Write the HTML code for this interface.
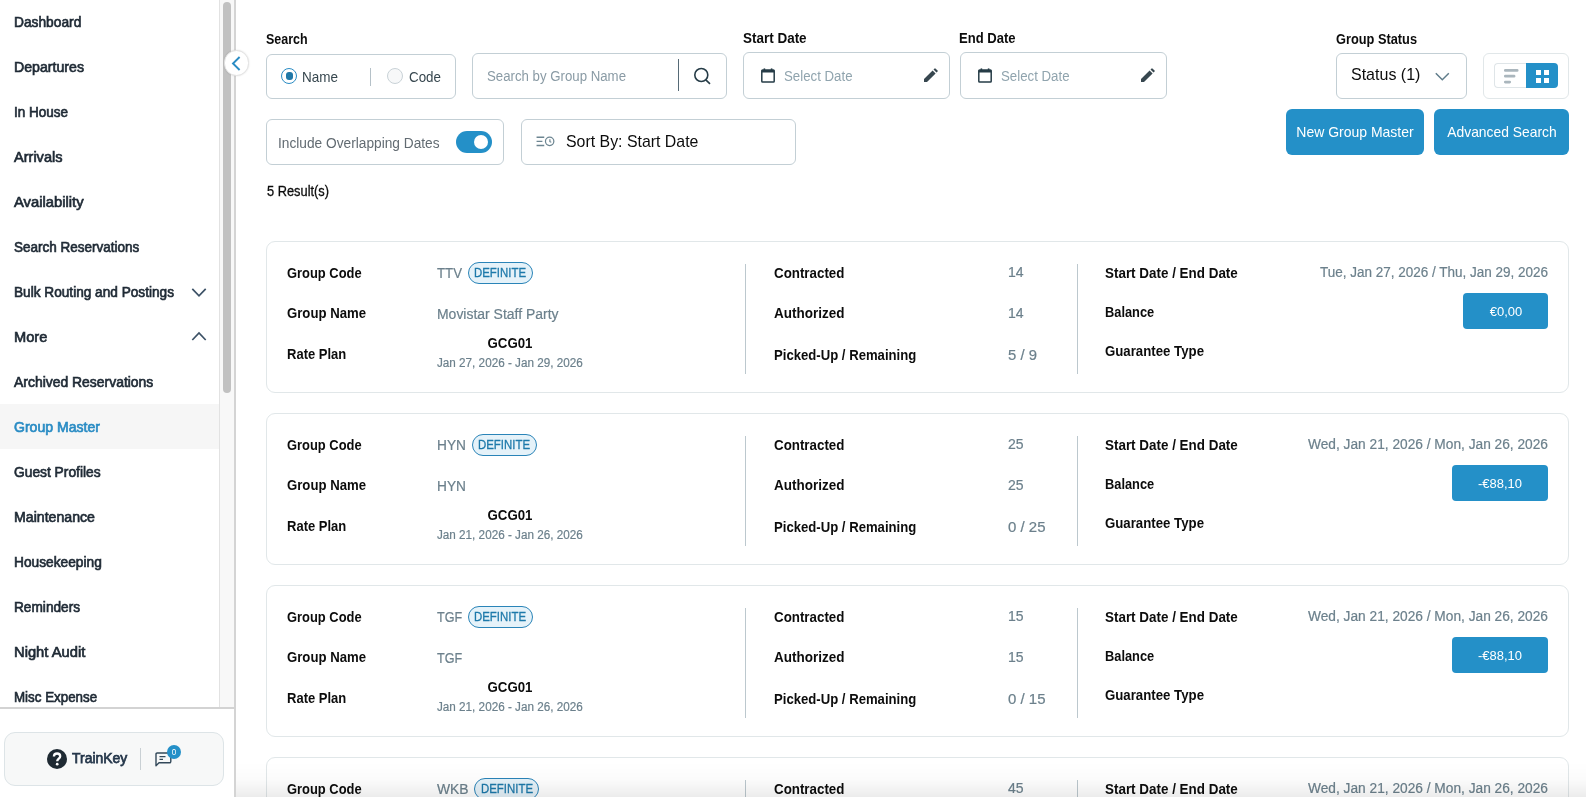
<!DOCTYPE html>
<html lang="en">
<head>
<meta charset="utf-8">
<title>Group Master</title>
<style>
*{box-sizing:border-box;margin:0;padding:0}
html,body{width:1586px;height:797px;overflow:hidden;background:#fff}
body{position:relative;font-family:"Liberation Sans",sans-serif}
.t{position:absolute;white-space:nowrap;line-height:20px;display:inline-block}
.abs{position:absolute}
.box{position:absolute;border:1px solid #c3cfd5;border-radius:6px;background:#fff}
.card{position:absolute;left:266px;width:1303px;height:152px;border:1px solid #e1e7e9;border-radius:9px;background:#fff}
.vsep{position:absolute;width:1px;height:110px;background:#bcc8ce}
.badge{position:absolute;width:65.2px;height:21.7px;border:1px solid #2a84b8;border-radius:11px;background:#e5f2f9}
.bal{position:absolute;height:36px;border-radius:4px;background:#2490c8}
.btn{position:absolute;top:109px;height:46px;border-radius:6px;background:#2490c8}
svg{position:absolute;overflow:visible}
</style>
</head>
<body>
<!-- sidebar -->
<div class="abs" style="left:0;top:404px;width:219px;height:45px;background:#f6f6f6"></div>
<div class="abs" style="left:219px;top:0;width:1px;height:707px;background:#e2e2e2"></div>
<div class="abs" style="left:220px;top:0;width:14.5px;height:707px;background:#f8f8f8"></div>
<div class="abs" style="left:223.4px;top:2px;width:7.6px;height:391.4px;border-radius:4px;background:#c1c1c1"></div>
<div class="abs" style="left:234.2px;top:0;width:2px;height:797px;background:#d4d4d4"></div>
<div class="abs" style="left:0;top:706.8px;width:235px;height:2px;background:#d3d3d3"></div>
<!-- chevrons -->
<svg style="left:191px;top:287px" width="16" height="11" viewBox="0 0 16 11"><path d="M1.3 1.8 L8 8.8 L14.7 1.8" fill="none" stroke="#3c5166" stroke-width="1.7"/></svg>
<svg style="left:191px;top:331px" width="16" height="11" viewBox="0 0 16 11"><path d="M1.3 9 L8 2 L14.7 9" fill="none" stroke="#3c5166" stroke-width="1.7"/></svg>
<!-- trainkey -->
<div class="abs" style="left:4px;top:732px;width:220px;height:53.6px;border:1px solid #dde4e7;border-radius:11px;background:#f7f8f8"></div>
<svg style="left:47px;top:749px" width="20" height="20" viewBox="0 0 20 20"><circle cx="10" cy="10" r="10" fill="#1f2a33"/><path d="M6.9 7.6 C6.9 5.6 8.3 4.5 10.1 4.5 C11.9 4.5 13.2 5.6 13.2 7.2 C13.2 9.6 10.2 9.6 10.2 12.2" fill="none" stroke="#fff" stroke-width="2.3"/><circle cx="10.2" cy="15.2" r="1.35" fill="#fff"/></svg>
<div class="abs" style="left:140px;top:748px;width:1px;height:22px;background:#c9d0d4"></div>
<svg style="left:155px;top:752px" width="17" height="15" viewBox="0 0 17 15"><path d="M1 13.8 V2.2 Q1 1 2.2 1 H14.6 Q15.8 1 15.8 2.2 V9.6 Q15.8 10.8 14.6 10.8 H4 Z" fill="none" stroke="#33495a" stroke-width="1.4" stroke-linejoin="round"/><path d="M4.5 4.6 H10.5 M4.5 7.4 H8" stroke="#33495a" stroke-width="1.3"/></svg>
<div class="abs" style="left:167.2px;top:745px;width:14px;height:14px;border-radius:7px;background:#2490c8"></div>
<!-- collapse circle -->
<div class="abs" style="left:223.6px;top:50px;width:25.6px;height:25.6px;border-radius:13px;background:#fff;border:1px solid #e3e3e3;box-shadow:0 0 2px rgba(0,0,0,.12)"></div>
<svg style="left:231px;top:55.6px" width="10" height="15" viewBox="0 0 10 15"><path d="M8.6 1 L2 7.5 L8.6 14" fill="none" stroke="#2a8cc4" stroke-width="1.9"/></svg>

<!-- toolbar boxes -->
<div class="box" style="left:266px;top:54px;width:190px;height:45px"></div>
<div class="abs" style="left:280.7px;top:67.7px;width:16.6px;height:16.6px;border-radius:9px;border:1.3px solid #2a8cc4;background:#fff"></div>
<div class="abs" style="left:285.9px;top:72.3px;width:7.3px;height:7.3px;border-radius:3px;background:#1f78a8"></div>
<div class="abs" style="left:370px;top:68px;width:1px;height:18px;background:#b5c1c8"></div>
<div class="abs" style="left:387px;top:68px;width:16px;height:16px;border-radius:8px;border:1px solid #c9d2d7;background:#f7f8f9"></div>

<div class="box" style="left:472px;top:53px;width:255px;height:46px"></div>
<div class="abs" style="left:678.2px;top:59px;width:1px;height:32px;background:#566a76"></div>
<svg style="left:692px;top:66.4px" width="20" height="20" viewBox="0 0 20 20"><circle cx="9.3" cy="9" r="6.5" fill="none" stroke="#263c47" stroke-width="1.6"/><path d="M13.8 13.8 L18 17.8" stroke="#263c47" stroke-width="1.6"/></svg>

<div class="box" style="left:743px;top:52px;width:207px;height:47px"></div>
<div class="box" style="left:960px;top:52px;width:207px;height:47px"></div>
<!-- calendar + pencil icons -->
<svg style="left:761px;top:67.5px" width="14" height="15" viewBox="0 0 14 15"><path d="M1.6 2 H12.4 Q13.2 2 13.2 2.8 V13.2 Q13.2 14 12.4 14 H1.6 Q.8 14 .8 13.2 V2.8 Q.8 2 1.6 2 Z" fill="none" stroke="#263c47" stroke-width="1.5"/><rect x=".8" y="2" width="12.4" height="2.5" fill="#263c47"/><rect x="2.6" y=".4" width="1.6" height="2.5" fill="#263c47"/><rect x="9.8" y=".4" width="1.6" height="2.5" fill="#263c47"/></svg>
<svg style="left:978px;top:67.5px" width="14" height="15" viewBox="0 0 14 15"><path d="M1.6 2 H12.4 Q13.2 2 13.2 2.8 V13.2 Q13.2 14 12.4 14 H1.6 Q.8 14 .8 13.2 V2.8 Q.8 2 1.6 2 Z" fill="none" stroke="#263c47" stroke-width="1.5"/><rect x=".8" y="2" width="12.4" height="2.5" fill="#263c47"/><rect x="2.6" y=".4" width="1.6" height="2.5" fill="#263c47"/><rect x="9.8" y=".4" width="1.6" height="2.5" fill="#263c47"/></svg>
<svg style="left:924px;top:68px" width="14" height="14" viewBox="0 0 14 14"><path d="M0 14 V11 L8.6 2.4 L11.6 5.4 L3 14 Z M9.5 1.5 L10.6 .4 Q11 0 11.4 .4 L13.6 2.6 Q14 3 13.6 3.4 L12.5 4.5 Z" fill="#37474f"/></svg>
<svg style="left:1141px;top:68px" width="14" height="14" viewBox="0 0 14 14"><path d="M0 14 V11 L8.6 2.4 L11.6 5.4 L3 14 Z M9.5 1.5 L10.6 .4 Q11 0 11.4 .4 L13.6 2.6 Q14 3 13.6 3.4 L12.5 4.5 Z" fill="#37474f"/></svg>

<div class="box" style="left:1336px;top:53px;width:131px;height:46px"></div>
<svg style="left:1435px;top:72px" width="15" height="10" viewBox="0 0 15 10"><path d="M.8 1.2 L7.3 7.8 L13.8 1.2" fill="none" stroke="#607d8b" stroke-width="1.5"/></svg>
<div class="box" style="left:1483px;top:53px;width:86px;height:46px;border-color:#e1e7e9"></div>
<div class="abs" style="left:1494px;top:63px;width:33px;height:25px;border:1px solid #dfe5e8;border-right:0;border-radius:4px 0 0 4px;background:#fff"></div>
<div class="abs" style="left:1526px;top:63px;width:32px;height:25px;border-radius:0 4px 4px 0;background:#2490c8"></div>
<svg style="left:1504px;top:69px" width="15" height="15" viewBox="0 0 15 15"><path d="M1.3 1.4 H13.2 M1.3 7.2 H10.1 M1.3 13.1 H5.7" stroke="#aab6bd" stroke-width="2.7" stroke-linecap="round"/></svg>
<div class="abs" style="left:1535.7px;top:69.9px;width:5px;height:5px;background:#fff"></div>
<div class="abs" style="left:1544.3px;top:69.9px;width:5px;height:5px;background:#fff"></div>
<div class="abs" style="left:1535.7px;top:78.3px;width:5px;height:5px;background:#fff"></div>
<div class="abs" style="left:1544.3px;top:78.3px;width:5px;height:5px;background:#fff"></div>

<!-- second row -->
<div class="box" style="left:266px;top:119px;width:238px;height:46px"></div>
<div class="abs" style="left:456px;top:131px;width:36px;height:22px;border-radius:11px;background:#2490c8"></div>
<div class="abs" style="left:473.6px;top:134.6px;width:14.8px;height:14.8px;border-radius:8px;background:#fff"></div>
<div class="box" style="left:521px;top:119px;width:275px;height:46px"></div>
<svg style="left:536px;top:136.1px" width="19" height="11" viewBox="0 0 19 11"><path d="M.56 1.2 H8.25 M.56 5.4 H6.4 M.56 9.5 H8.25" stroke="#6c8591" stroke-width="1.35"/><circle cx="13.65" cy="5.3" r="4.2" fill="none" stroke="#6c8591" stroke-width="1.25"/><path d="M13.9 3.3 V5.7 L15.3 6.2" fill="none" stroke="#6c8591" stroke-width="1.2"/></svg>
<div class="btn" style="left:1286px;width:138px"></div>
<div class="btn" style="left:1434px;width:135px"></div>

<div class="card" style="top:241px"></div>
<div class="vsep" style="left:745px;top:264px"></div>
<div class="vsep" style="left:1077px;top:264px"></div>
<div class="badge" style="left:467.7px;top:262px"></div>
<div class="bal" style="left:1463px;top:293px;width:85px"></div>
<div class="card" style="top:413px"></div>
<div class="vsep" style="left:745px;top:436px"></div>
<div class="vsep" style="left:1077px;top:436px"></div>
<div class="badge" style="left:471.6px;top:434px"></div>
<div class="bal" style="left:1452px;top:465px;width:96px"></div>
<div class="card" style="top:585px"></div>
<div class="vsep" style="left:745px;top:608px"></div>
<div class="vsep" style="left:1077px;top:608px"></div>
<div class="badge" style="left:467.9px;top:606px"></div>
<div class="bal" style="left:1452px;top:637px;width:96px"></div>
<div class="card" style="top:757px"></div>
<div class="vsep" style="left:745px;top:780px"></div>
<div class="vsep" style="left:1077px;top:780px"></div>
<div class="badge" style="left:474.3px;top:778px"></div>
<div class="bal" style="left:1452px;top:809px;width:96px"></div>
<div id="txt" style="position:absolute;left:0;top:0;width:1586px;height:797px;will-change:transform">
<span class="t" id="t0" style="top:11.80px;font-size:15px;color:#1f2a35;-webkit-text-stroke:0.7px #1f2a35;left:14.40px;transform-origin:0 50%;transform:scaleX(0.9170);">Dashboard</span>
<span class="t" id="t1" style="top:56.80px;font-size:15px;color:#1f2a35;-webkit-text-stroke:0.7px #1f2a35;left:14.40px;transform-origin:0 50%;transform:scaleX(0.9434);">Departures</span>
<span class="t" id="t2" style="top:101.80px;font-size:15px;color:#1f2a35;-webkit-text-stroke:0.7px #1f2a35;left:14.40px;transform-origin:0 50%;transform:scaleX(0.8993);">In House</span>
<span class="t" id="t3" style="top:146.80px;font-size:15px;color:#1f2a35;-webkit-text-stroke:0.7px #1f2a35;left:14.40px;transform-origin:0 50%;transform:scaleX(0.9697);">Arrivals</span>
<span class="t" id="t4" style="top:191.80px;font-size:15px;color:#1f2a35;-webkit-text-stroke:0.7px #1f2a35;left:14.40px;transform-origin:0 50%;transform:scaleX(0.9859);">Availability</span>
<span class="t" id="t5" style="top:236.80px;font-size:15px;color:#1f2a35;-webkit-text-stroke:0.7px #1f2a35;left:14.40px;transform-origin:0 50%;transform:scaleX(0.8999);">Search Reservations</span>
<span class="t" id="t6" style="top:281.80px;font-size:15px;color:#1f2a35;-webkit-text-stroke:0.7px #1f2a35;left:14.40px;transform-origin:0 50%;transform:scaleX(0.9093);">Bulk Routing and Postings</span>
<span class="t" id="t7" style="top:326.80px;font-size:15px;color:#1f2a35;-webkit-text-stroke:0.7px #1f2a35;left:14.40px;transform-origin:0 50%;transform:scaleX(0.9740);">More</span>
<span class="t" id="t8" style="top:371.80px;font-size:15px;color:#1f2a35;-webkit-text-stroke:0.7px #1f2a35;left:14.40px;transform-origin:0 50%;transform:scaleX(0.9282);">Archived Reservations</span>
<span class="t" id="t9" style="top:416.80px;font-size:15px;color:#2a8cc4;-webkit-text-stroke:0.7px #2a8cc4;left:14.40px;transform-origin:0 50%;transform:scaleX(0.9367);">Group Master</span>
<span class="t" id="t10" style="top:461.80px;font-size:15px;color:#1f2a35;-webkit-text-stroke:0.7px #1f2a35;left:14.40px;transform-origin:0 50%;transform:scaleX(0.9191);">Guest Profiles</span>
<span class="t" id="t11" style="top:506.80px;font-size:15px;color:#1f2a35;-webkit-text-stroke:0.7px #1f2a35;left:14.40px;transform-origin:0 50%;transform:scaleX(0.9429);">Maintenance</span>
<span class="t" id="t12" style="top:551.80px;font-size:15px;color:#1f2a35;-webkit-text-stroke:0.7px #1f2a35;left:14.40px;transform-origin:0 50%;transform:scaleX(0.9155);">Housekeeping</span>
<span class="t" id="t13" style="top:596.80px;font-size:15px;color:#1f2a35;-webkit-text-stroke:0.7px #1f2a35;left:14.40px;transform-origin:0 50%;transform:scaleX(0.9113);">Reminders</span>
<span class="t" id="t14" style="top:641.80px;font-size:15px;color:#1f2a35;-webkit-text-stroke:0.7px #1f2a35;left:14.40px;transform-origin:0 50%;transform:scaleX(0.9828);">Night Audit</span>
<span class="t" id="t15" style="top:686.80px;font-size:15px;color:#1f2a35;-webkit-text-stroke:0.7px #1f2a35;left:14.40px;transform-origin:0 50%;transform:scaleX(0.8900);">Misc Expense</span>
<span class="t" id="t16" style="top:747.63px;font-size:15.5px;color:#24364a;-webkit-text-stroke:0.75px #24364a;left:72.20px;transform-origin:0 50%;transform:scaleX(0.8999);">TrainKey</span>
<span class="t" id="t17" style="top:742.08px;font-size:9px;color:#fff;left:174.20px;transform-origin:50% 50%;transform:translateX(-50%) scaleX(0.9000);">0</span>
<span class="t" id="t18" style="top:29.10px;font-size:15px;color:#0c0c0c;font-weight:700;left:266.00px;transform-origin:0 50%;transform:scaleX(0.8332);">Search</span>
<span class="t" id="t19" style="top:27.80px;font-size:15px;color:#0c0c0c;font-weight:700;left:742.70px;transform-origin:0 50%;transform:scaleX(0.8976);">Start Date</span>
<span class="t" id="t20" style="top:27.80px;font-size:15px;color:#0c0c0c;font-weight:700;left:959.30px;transform-origin:0 50%;transform:scaleX(0.8690);">End Date</span>
<span class="t" id="t21" style="top:28.80px;font-size:15px;color:#0c0c0c;font-weight:700;left:1336.00px;transform-origin:0 50%;transform:scaleX(0.8525);">Group Status</span>
<span class="t" id="t22" style="top:66.80px;font-size:15px;color:#37474f;left:302.00px;transform-origin:0 50%;transform:scaleX(0.8996);">Name</span>
<span class="t" id="t23" style="top:66.80px;font-size:15px;color:#37474f;left:408.50px;transform-origin:0 50%;transform:scaleX(0.8924);">Code</span>
<span class="t" id="t24" style="top:66.05px;font-size:14px;color:#8a9ba5;left:486.50px;transform-origin:0 50%;transform:scaleX(0.9451);">Search by Group Name</span>
<span class="t" id="t25" style="top:66.15px;font-size:14px;color:#90a4ae;left:783.80px;transform-origin:0 50%;transform:scaleX(0.9465);">Select Date</span>
<span class="t" id="t26" style="top:66.15px;font-size:14px;color:#90a4ae;left:1000.80px;transform-origin:0 50%;transform:scaleX(0.9465);">Select Date</span>
<span class="t" id="t27" style="top:65.15px;font-size:16.6px;color:#0c0c0c;left:1351.00px;transform-origin:0 50%;transform:scaleX(0.9647);">Status (1)</span>
<span class="t" id="t28" style="top:133.15px;font-size:14px;color:#626b72;left:278.40px;transform-origin:0 50%;transform:scaleX(0.9794);">Include Overlapping Dates</span>
<span class="t" id="t29" style="top:131.65px;font-size:16.6px;color:#0c0c0c;left:566.20px;transform-origin:0 50%;transform:scaleX(0.9570);">Sort By: Start Date</span>
<span class="t" id="t30" style="top:122.38px;font-size:14.5px;color:#fff;left:1355.20px;transform-origin:50% 50%;transform:translateX(-50%) scaleX(0.9648);">New Group Master</span>
<span class="t" id="t31" style="top:122.38px;font-size:14.5px;color:#fff;left:1501.50px;transform-origin:50% 50%;transform:translateX(-50%) scaleX(0.9566);">Advanced Search</span>
<span class="t" id="t32" style="top:180.75px;font-size:14px;color:#0c0c0c;-webkit-text-stroke:0.3px #0c0c0c;left:266.70px;transform-origin:0 50%;transform:scaleX(0.9160);">5 Result(s)</span>
<span class="t" id="t33" style="top:262.80px;font-size:15px;color:#0c0c0c;font-weight:700;left:287.40px;transform-origin:0 50%;transform:scaleX(0.8607);">Group Code</span>
<span class="t" id="t34" style="top:303.30px;font-size:15px;color:#0c0c0c;font-weight:700;left:287.40px;transform-origin:0 50%;transform:scaleX(0.8776);">Group Name</span>
<span class="t" id="t35" style="top:343.50px;font-size:15px;color:#0c0c0c;font-weight:700;left:287.40px;transform-origin:0 50%;transform:scaleX(0.8675);">Rate Plan</span>
<span class="t" id="t36" style="top:263.15px;font-size:14px;color:#6c808c;-webkit-text-stroke:0.2px #6c808c;left:437.40px;transform-origin:0 50%;transform:scaleX(0.9451);">TTV</span>
<span class="t" id="t37" style="top:262.80px;font-size:13px;color:#1d79aa;-webkit-text-stroke:0.3px #1d79aa;left:474.20px;transform-origin:0 50%;transform:scaleX(0.8779);">DEFINITE</span>
<span class="t" id="t38" style="top:303.55px;font-size:14px;color:#6c808c;-webkit-text-stroke:0.2px #6c808c;left:437.40px;transform-origin:0 50%;transform:scaleX(0.9967);">Movistar Staff Party</span>
<span class="t" id="t39" style="top:333.41px;font-size:14.4px;color:#0c0c0c;font-weight:700;left:510.20px;transform-origin:50% 50%;transform:translateX(-50%) scaleX(0.9222);">GCG01</span>
<span class="t" id="t40" style="top:352.64px;font-size:12.3px;color:#6c808c;-webkit-text-stroke:0.2px #6c808c;left:437.30px;transform-origin:0 50%;transform:scaleX(0.9513);">Jan 27, 2026 - Jan 29, 2026</span>
<span class="t" id="t41" style="top:262.50px;font-size:15px;color:#0c0c0c;font-weight:700;left:773.80px;transform-origin:0 50%;transform:scaleX(0.8890);">Contracted</span>
<span class="t" id="t42" style="top:302.60px;font-size:15px;color:#0c0c0c;font-weight:700;left:773.80px;transform-origin:0 50%;transform:scaleX(0.8988);">Authorized</span>
<span class="t" id="t43" style="top:344.60px;font-size:15px;color:#0c0c0c;font-weight:700;left:773.80px;transform-origin:0 50%;transform:scaleX(0.8754);">Picked-Up / Remaining</span>
<span class="t" id="t44" style="top:262.15px;font-size:14px;color:#6c808c;-webkit-text-stroke:0.2px #6c808c;left:1008.30px;transform-origin:0 50%;transform:scaleX(1.0014);">14</span>
<span class="t" id="t45" style="top:302.65px;font-size:14px;color:#6c808c;-webkit-text-stroke:0.2px #6c808c;left:1008.30px;transform-origin:0 50%;transform:scaleX(1.0014);">14</span>
<span class="t" id="t46" style="top:344.95px;font-size:14px;color:#6c808c;-webkit-text-stroke:0.2px #6c808c;left:1008.30px;transform-origin:0 50%;transform:scaleX(1.0606);">5 / 9</span>
<span class="t" id="t47" style="top:262.70px;font-size:15px;color:#0c0c0c;font-weight:700;left:1104.90px;transform-origin:0 50%;transform:scaleX(0.8950);">Start Date / End Date</span>
<span class="t" id="t48" style="top:301.50px;font-size:15px;color:#0c0c0c;font-weight:700;left:1104.90px;transform-origin:0 50%;transform:scaleX(0.8550);">Balance</span>
<span class="t" id="t49" style="top:340.80px;font-size:15px;color:#0c0c0c;font-weight:700;left:1104.90px;transform-origin:0 50%;transform:scaleX(0.8818);">Guarantee Type</span>
<span class="t" id="t50" style="top:262.45px;font-size:14px;color:#6c808c;-webkit-text-stroke:0.2px #6c808c;left:1547.90px;transform-origin:100% 50%;transform:translateX(-100%) scaleX(0.9635);">Tue, Jan 27, 2026 / Thu, Jan 29, 2026</span>
<span class="t" id="t51" style="top:302.37px;font-size:12.5px;color:#fff;left:1505.50px;transform-origin:50% 50%;transform:translateX(-50%) scaleX(1.0390);">€0,00</span>
<span class="t" id="t52" style="top:434.80px;font-size:15px;color:#0c0c0c;font-weight:700;left:287.40px;transform-origin:0 50%;transform:scaleX(0.8607);">Group Code</span>
<span class="t" id="t53" style="top:475.30px;font-size:15px;color:#0c0c0c;font-weight:700;left:287.40px;transform-origin:0 50%;transform:scaleX(0.8776);">Group Name</span>
<span class="t" id="t54" style="top:515.50px;font-size:15px;color:#0c0c0c;font-weight:700;left:287.40px;transform-origin:0 50%;transform:scaleX(0.8675);">Rate Plan</span>
<span class="t" id="t55" style="top:435.15px;font-size:14px;color:#6c808c;-webkit-text-stroke:0.2px #6c808c;left:437.40px;transform-origin:0 50%;transform:scaleX(0.9776);">HYN</span>
<span class="t" id="t56" style="top:434.80px;font-size:13px;color:#1d79aa;-webkit-text-stroke:0.3px #1d79aa;left:478.10px;transform-origin:0 50%;transform:scaleX(0.8779);">DEFINITE</span>
<span class="t" id="t57" style="top:475.55px;font-size:14px;color:#6c808c;-webkit-text-stroke:0.2px #6c808c;left:437.40px;transform-origin:0 50%;transform:scaleX(0.9776);">HYN</span>
<span class="t" id="t58" style="top:505.41px;font-size:14.4px;color:#0c0c0c;font-weight:700;left:510.20px;transform-origin:50% 50%;transform:translateX(-50%) scaleX(0.9222);">GCG01</span>
<span class="t" id="t59" style="top:524.64px;font-size:12.3px;color:#6c808c;-webkit-text-stroke:0.2px #6c808c;left:437.30px;transform-origin:0 50%;transform:scaleX(0.9513);">Jan 21, 2026 - Jan 26, 2026</span>
<span class="t" id="t60" style="top:434.50px;font-size:15px;color:#0c0c0c;font-weight:700;left:773.80px;transform-origin:0 50%;transform:scaleX(0.8890);">Contracted</span>
<span class="t" id="t61" style="top:474.60px;font-size:15px;color:#0c0c0c;font-weight:700;left:773.80px;transform-origin:0 50%;transform:scaleX(0.8988);">Authorized</span>
<span class="t" id="t62" style="top:516.60px;font-size:15px;color:#0c0c0c;font-weight:700;left:773.80px;transform-origin:0 50%;transform:scaleX(0.8754);">Picked-Up / Remaining</span>
<span class="t" id="t63" style="top:434.15px;font-size:14px;color:#6c808c;-webkit-text-stroke:0.2px #6c808c;left:1008.30px;transform-origin:0 50%;transform:scaleX(1.0014);">25</span>
<span class="t" id="t64" style="top:474.65px;font-size:14px;color:#6c808c;-webkit-text-stroke:0.2px #6c808c;left:1008.30px;transform-origin:0 50%;transform:scaleX(1.0014);">25</span>
<span class="t" id="t65" style="top:516.95px;font-size:14px;color:#6c808c;-webkit-text-stroke:0.2px #6c808c;left:1008.30px;transform-origin:0 50%;transform:scaleX(1.0705);">0 / 25</span>
<span class="t" id="t66" style="top:434.70px;font-size:15px;color:#0c0c0c;font-weight:700;left:1104.90px;transform-origin:0 50%;transform:scaleX(0.8950);">Start Date / End Date</span>
<span class="t" id="t67" style="top:473.50px;font-size:15px;color:#0c0c0c;font-weight:700;left:1104.90px;transform-origin:0 50%;transform:scaleX(0.8550);">Balance</span>
<span class="t" id="t68" style="top:512.80px;font-size:15px;color:#0c0c0c;font-weight:700;left:1104.90px;transform-origin:0 50%;transform:scaleX(0.8818);">Guarantee Type</span>
<span class="t" id="t69" style="top:434.45px;font-size:14px;color:#6c808c;-webkit-text-stroke:0.2px #6c808c;left:1547.90px;transform-origin:100% 50%;transform:translateX(-100%) scaleX(0.9799);">Wed, Jan 21, 2026 / Mon, Jan 26, 2026</span>
<span class="t" id="t70" style="top:474.37px;font-size:12.5px;color:#fff;left:1500.00px;transform-origin:50% 50%;transform:translateX(-50%) scaleX(1.0352);">-€88,10</span>
<span class="t" id="t71" style="top:606.80px;font-size:15px;color:#0c0c0c;font-weight:700;left:287.40px;transform-origin:0 50%;transform:scaleX(0.8607);">Group Code</span>
<span class="t" id="t72" style="top:647.30px;font-size:15px;color:#0c0c0c;font-weight:700;left:287.40px;transform-origin:0 50%;transform:scaleX(0.8776);">Group Name</span>
<span class="t" id="t73" style="top:687.50px;font-size:15px;color:#0c0c0c;font-weight:700;left:287.40px;transform-origin:0 50%;transform:scaleX(0.8675);">Rate Plan</span>
<span class="t" id="t74" style="top:607.15px;font-size:14px;color:#6c808c;-webkit-text-stroke:0.2px #6c808c;left:437.40px;transform-origin:0 50%;transform:scaleX(0.9000);">TGF</span>
<span class="t" id="t75" style="top:606.80px;font-size:13px;color:#1d79aa;-webkit-text-stroke:0.3px #1d79aa;left:474.40px;transform-origin:0 50%;transform:scaleX(0.8779);">DEFINITE</span>
<span class="t" id="t76" style="top:647.55px;font-size:14px;color:#6c808c;-webkit-text-stroke:0.2px #6c808c;left:437.40px;transform-origin:0 50%;transform:scaleX(0.9000);">TGF</span>
<span class="t" id="t77" style="top:677.41px;font-size:14.4px;color:#0c0c0c;font-weight:700;left:510.20px;transform-origin:50% 50%;transform:translateX(-50%) scaleX(0.9222);">GCG01</span>
<span class="t" id="t78" style="top:696.64px;font-size:12.3px;color:#6c808c;-webkit-text-stroke:0.2px #6c808c;left:437.30px;transform-origin:0 50%;transform:scaleX(0.9513);">Jan 21, 2026 - Jan 26, 2026</span>
<span class="t" id="t79" style="top:606.50px;font-size:15px;color:#0c0c0c;font-weight:700;left:773.80px;transform-origin:0 50%;transform:scaleX(0.8890);">Contracted</span>
<span class="t" id="t80" style="top:646.60px;font-size:15px;color:#0c0c0c;font-weight:700;left:773.80px;transform-origin:0 50%;transform:scaleX(0.8988);">Authorized</span>
<span class="t" id="t81" style="top:688.60px;font-size:15px;color:#0c0c0c;font-weight:700;left:773.80px;transform-origin:0 50%;transform:scaleX(0.8754);">Picked-Up / Remaining</span>
<span class="t" id="t82" style="top:606.15px;font-size:14px;color:#6c808c;-webkit-text-stroke:0.2px #6c808c;left:1008.30px;transform-origin:0 50%;transform:scaleX(1.0014);">15</span>
<span class="t" id="t83" style="top:646.65px;font-size:14px;color:#6c808c;-webkit-text-stroke:0.2px #6c808c;left:1008.30px;transform-origin:0 50%;transform:scaleX(1.0014);">15</span>
<span class="t" id="t84" style="top:688.95px;font-size:14px;color:#6c808c;-webkit-text-stroke:0.2px #6c808c;left:1008.30px;transform-origin:0 50%;transform:scaleX(1.0705);">0 / 15</span>
<span class="t" id="t85" style="top:606.70px;font-size:15px;color:#0c0c0c;font-weight:700;left:1104.90px;transform-origin:0 50%;transform:scaleX(0.8950);">Start Date / End Date</span>
<span class="t" id="t86" style="top:645.50px;font-size:15px;color:#0c0c0c;font-weight:700;left:1104.90px;transform-origin:0 50%;transform:scaleX(0.8550);">Balance</span>
<span class="t" id="t87" style="top:684.80px;font-size:15px;color:#0c0c0c;font-weight:700;left:1104.90px;transform-origin:0 50%;transform:scaleX(0.8818);">Guarantee Type</span>
<span class="t" id="t88" style="top:606.45px;font-size:14px;color:#6c808c;-webkit-text-stroke:0.2px #6c808c;left:1547.90px;transform-origin:100% 50%;transform:translateX(-100%) scaleX(0.9799);">Wed, Jan 21, 2026 / Mon, Jan 26, 2026</span>
<span class="t" id="t89" style="top:646.37px;font-size:12.5px;color:#fff;left:1500.00px;transform-origin:50% 50%;transform:translateX(-50%) scaleX(1.0352);">-€88,10</span>
<span class="t" id="t90" style="top:778.80px;font-size:15px;color:#0c0c0c;font-weight:700;left:287.40px;transform-origin:0 50%;transform:scaleX(0.8607);">Group Code</span>
<span class="t" id="t91" style="top:819.30px;font-size:15px;color:#0c0c0c;font-weight:700;left:287.40px;transform-origin:0 50%;transform:scaleX(0.8776);">Group Name</span>
<span class="t" id="t92" style="top:859.50px;font-size:15px;color:#0c0c0c;font-weight:700;left:287.40px;transform-origin:0 50%;transform:scaleX(0.8675);">Rate Plan</span>
<span class="t" id="t93" style="top:779.15px;font-size:14px;color:#6c808c;-webkit-text-stroke:0.2px #6c808c;left:437.40px;transform-origin:0 50%;transform:scaleX(0.9909);">WKB</span>
<span class="t" id="t94" style="top:778.80px;font-size:13px;color:#1d79aa;-webkit-text-stroke:0.3px #1d79aa;left:480.80px;transform-origin:0 50%;transform:scaleX(0.8779);">DEFINITE</span>
<span class="t" id="t95" style="top:819.55px;font-size:14px;color:#6c808c;-webkit-text-stroke:0.2px #6c808c;left:437.40px;transform-origin:0 50%;transform:scaleX(0.9909);">WKB</span>
<span class="t" id="t96" style="top:849.41px;font-size:14.4px;color:#0c0c0c;font-weight:700;left:510.20px;transform-origin:50% 50%;transform:translateX(-50%) scaleX(0.9222);">GCG01</span>
<span class="t" id="t97" style="top:868.64px;font-size:12.3px;color:#6c808c;-webkit-text-stroke:0.2px #6c808c;left:437.30px;transform-origin:0 50%;transform:scaleX(0.9513);">Jan 21, 2026 - Jan 26, 2026</span>
<span class="t" id="t98" style="top:778.50px;font-size:15px;color:#0c0c0c;font-weight:700;left:773.80px;transform-origin:0 50%;transform:scaleX(0.8890);">Contracted</span>
<span class="t" id="t99" style="top:818.60px;font-size:15px;color:#0c0c0c;font-weight:700;left:773.80px;transform-origin:0 50%;transform:scaleX(0.8988);">Authorized</span>
<span class="t" id="t100" style="top:860.60px;font-size:15px;color:#0c0c0c;font-weight:700;left:773.80px;transform-origin:0 50%;transform:scaleX(0.8754);">Picked-Up / Remaining</span>
<span class="t" id="t101" style="top:778.15px;font-size:14px;color:#6c808c;-webkit-text-stroke:0.2px #6c808c;left:1008.30px;transform-origin:0 50%;transform:scaleX(1.0014);">45</span>
<span class="t" id="t102" style="top:818.65px;font-size:14px;color:#6c808c;-webkit-text-stroke:0.2px #6c808c;left:1008.30px;transform-origin:0 50%;transform:scaleX(1.0014);">45</span>
<span class="t" id="t103" style="top:860.95px;font-size:14px;color:#6c808c;-webkit-text-stroke:0.2px #6c808c;left:1008.30px;transform-origin:0 50%;transform:scaleX(1.0705);">0 / 45</span>
<span class="t" id="t104" style="top:778.70px;font-size:15px;color:#0c0c0c;font-weight:700;left:1104.90px;transform-origin:0 50%;transform:scaleX(0.8950);">Start Date / End Date</span>
<span class="t" id="t105" style="top:817.50px;font-size:15px;color:#0c0c0c;font-weight:700;left:1104.90px;transform-origin:0 50%;transform:scaleX(0.8550);">Balance</span>
<span class="t" id="t106" style="top:856.80px;font-size:15px;color:#0c0c0c;font-weight:700;left:1104.90px;transform-origin:0 50%;transform:scaleX(0.8818);">Guarantee Type</span>
<span class="t" id="t107" style="top:778.45px;font-size:14px;color:#6c808c;-webkit-text-stroke:0.2px #6c808c;left:1547.90px;transform-origin:100% 50%;transform:translateX(-100%) scaleX(0.9799);">Wed, Jan 21, 2026 / Mon, Jan 26, 2026</span>
<span class="t" id="t108" style="top:818.37px;font-size:12.5px;color:#fff;left:1500.00px;transform-origin:50% 50%;transform:translateX(-50%) scaleX(1.0352);">-€88,10</span>
</div>
<!-- bottom fade -->
<div class="abs" style="left:236px;top:762px;width:1350px;height:35px;background:linear-gradient(to bottom,rgba(0,0,0,0) 0%,rgba(0,0,0,.015) 50%,rgba(0,0,0,.075) 100%)"></div>
</body>
</html>
